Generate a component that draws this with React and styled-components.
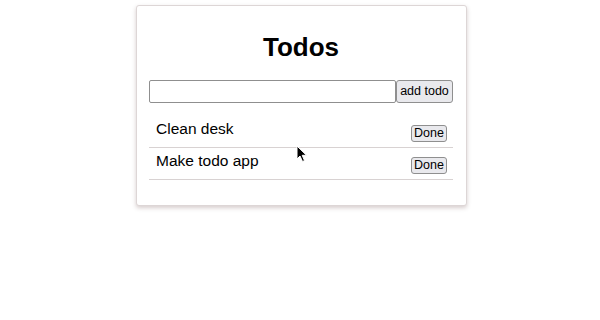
import React, { useState } from 'react';
import styled, { createGlobalStyle } from 'styled-components';

const GlobalStyle = createGlobalStyle`
  body {
    margin: 0;
    background: #ffffff;
    font-family: "Liberation Sans", Arial, sans-serif;
  }
`;

const Page = styled.div`
  width: 600px;
  height: 320px;
  display: flex;
  justify-content: center;
  align-items: flex-start;
  padding-top: 5px;
  box-sizing: border-box;
`;

const Card = styled.div`
  position: relative;
  width: 331px;
  box-sizing: border-box;
  padding: 26px 13px 25px 12px;
  margin-left: 3px;
  background: #fff;
  border: 1px solid #ddd6d6;
  border-radius: 3px;
  box-shadow: 0 2px 4px rgba(120, 90, 90, 0.3);
`;

const Title = styled.h1`
  margin: 0 0 18px;
  font-size: 26px;
  line-height: 30px;
  font-weight: 700;
  text-align: center;
  color: #000;
`;

const Form = styled.form`
  display: flex;
  margin-bottom: 13px;
`;

const Input = styled.input`
  flex: 1;
  min-width: 0;
  height: 23px;
  box-sizing: border-box;
  border: 1px solid #8f8f8f;
  border-radius: 2px;
  padding: 0 4px;
  font-size: 13px;
  font-family: inherit;
`;

const Button = styled.button`
  box-sizing: border-box;
  width: ${(p) => (p.$small ? '36px' : '57px')};
  height: ${(p) => (p.$small ? '17px' : '23px')};
  padding: 0;
  border: 1px solid #8f8f8f;
  border-radius: 3px;
  background: #e9e9ed;
  color: #000;
  font-family: inherit;
  font-size: 12.5px;
  line-height: 1;
  white-space: nowrap;
  cursor: pointer;
  margin-top: ${(p) => (p.$small ? '5px' : '0')};
  flex: none;
`;

const List = styled.ul`
  list-style: none;
  margin: 0;
  padding: 0;
`;

const Row = styled.li`
  display: flex;
  justify-content: space-between;
  align-items: flex-start;
  padding: 4px 6px 5px 7px;
  border-bottom: 1px solid #d8d2d2;
`;

const Text = styled.span`
  font-size: 15.5px;
  line-height: 18px;
  color: #000;
`;

const Cursor = styled.svg`
  position: absolute;
  left: 159px;
  top: 139px;
  pointer-events: none;
`;

export default function App() {
  const [todos] = useState(['Clean desk', 'Make todo app']);
  return (
    <>
      <GlobalStyle />
      <Page>
        <Card>
          <Title>Todos</Title>
          <Form onSubmit={(e) => e.preventDefault()}>
            <Input type="text" />
            <Button type="submit">add todo</Button>
          </Form>
          <List>
            {todos.map((t) => (
              <Row key={t}>
                <Text>{t}</Text>
                <Button $small>Done</Button>
              </Row>
            ))}
          </List>
          <Cursor width="12" height="18" viewBox="0 0 12 18">
            <path d="M1 1 L1 14 L4 11 L6.5 16.5 L8.5 15.6 L6.2 10.3 L10.5 10.3 Z" fill="#000" stroke="#fff" strokeWidth="1" strokeLinejoin="round" />
          </Cursor>
        </Card>
      </Page>
    </>
  );
}
